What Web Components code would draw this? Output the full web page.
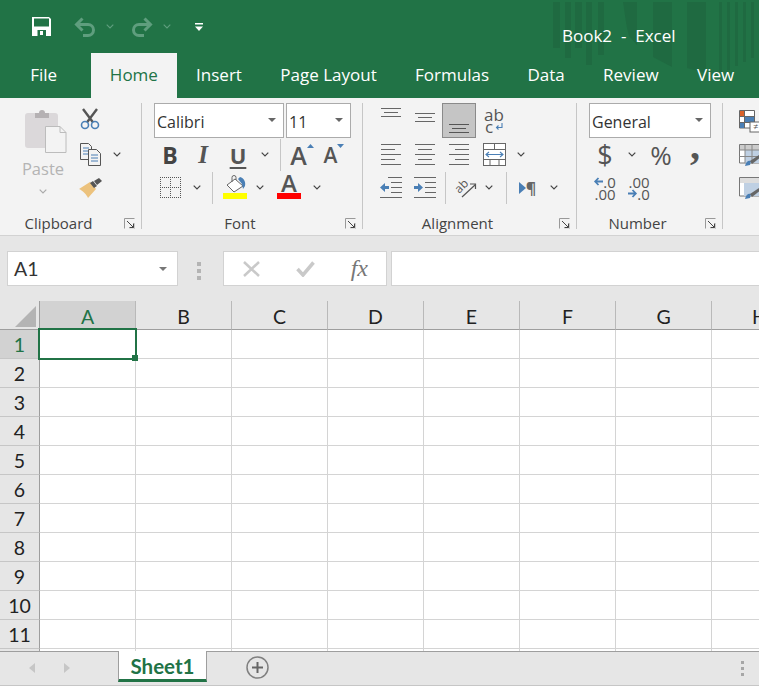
<!DOCTYPE html>
<html>
<head>
<meta charset="utf-8">
<title>Book2 - Excel</title>
<style>
    html,body{margin:0;padding:0;background:#fff;overflow:hidden}
</style>
</head>
<body>
<xl-app>
    <xl-titlebar></xl-titlebar>
    <xl-ribbon>
        <xl-group w="141" label="Clipboard">
            <xl-paste></xl-paste>
            <div style="display:block">
                <xl-row style="height:35px"><xl-tool w="24" icon="cut" style="padding-bottom:3px"></xl-tool></xl-row>
                <xl-row style="height:33px"><xl-tool w="24" icon="copy"></xl-tool><xl-tool w="30" icon="chev"></xl-tool></xl-row>
                <xl-row style="height:33px"><xl-tool w="24" icon="painter"></xl-tool></xl-row>
            </div>
        </xl-group>
        <xl-divider></xl-divider>
        <xl-group w="220" label="Font" pad="12">
            <div style="display:block">
                <xl-row style="height:35px;gap:2px"><xl-combo w="130">Calibri</xl-combo><xl-combo w="65">11</xl-combo></xl-row>
                <xl-row style="height:33px">
                    <xl-tool w="32" style="font:bold 23px 'Open Sans',sans-serif;color:#444">B</xl-tool>
                    <xl-tool w="34" style="font:italic bold 25px 'Liberation Serif',serif;color:#555">I</xl-tool>
                    <xl-tool w="36" style="font:bold 22px 'Open Sans',sans-serif;color:#555;text-decoration:underline;text-underline-offset:3px">U</xl-tool>
                    <xl-tool w="18" icon="chev"></xl-tool>
                    <xl-sep w="12"></xl-sep>
                    <xl-tool w="32" icon="up" raise style="font:600 25px 'Open Sans',sans-serif;color:#555">A</xl-tool>
                    <xl-tool w="32" icon="down" raise style="font:600 21px 'Open Sans',sans-serif;color:#555">A</xl-tool>
                </xl-row>
                <xl-row style="height:33px">
                    <xl-tool w="32" icon="borders"></xl-tool>
                    <xl-tool w="22" icon="chev"></xl-tool>
                    <xl-sep w="8"></xl-sep>
                    <xl-tool w="38" icon="fill"></xl-tool>
                    <xl-tool w="12" icon="chev"></xl-tool>
                    <xl-tool w="46" icon="redbar" stack style="font:600 24px/20px 'Open Sans',sans-serif;color:#555;padding-bottom:4px">A</xl-tool>
                    <xl-tool w="10" icon="chev"></xl-tool>
                </xl-row>
            </div>
        </xl-group>
        <xl-divider></xl-divider>
        <xl-group w="213" label="Alignment" pad="11">
            <div style="display:block">
                <xl-row style="height:35px">
                    <xl-tool w="34" icon="atop" style="padding-bottom:16px"></xl-tool>
                    <xl-tool w="34" icon="amid" style="padding-bottom:5px"></xl-tool>
                    <xl-tool w="34" icon="abot" active></xl-tool>
                    <xl-tool w="36" stack style="font:500 17px/12px 'Open Sans',sans-serif;color:#555">
                        <span>ab</span>
                        <xl-tool w="20" icon="ret" style="height:12px;gap:2px">c</xl-tool>
                    </xl-tool>
                </xl-row>
                <xl-row style="height:33px">
                    <xl-tool w="34" icon="hleft"></xl-tool>
                    <xl-tool w="34" icon="hmid"></xl-tool>
                    <xl-tool w="34" icon="hright"></xl-tool>
                    <xl-tool w="36" icon="merge"></xl-tool>
                    <xl-tool w="18" icon="chev"></xl-tool>
                </xl-row>
                <xl-row style="height:33px">
                    <xl-tool w="34" icon="outdent"></xl-tool>
                    <xl-tool w="34" icon="indent"></xl-tool>
                    <xl-sep w="6"></xl-sep>
                    <xl-tool w="36" icon="orient"></xl-tool>
                    <xl-tool w="10" icon="chev"></xl-tool>
                    <xl-sep w="24"></xl-sep>
                    <xl-tool w="19" before="rtl" style="font:bold 16px 'Open Sans',sans-serif;color:#666">¶</xl-tool>
                    <xl-tool w="34" icon="chev"></xl-tool>
                </xl-row>
            </div>
        </xl-group>
        <xl-divider></xl-divider>
        <xl-group w="145" label="Number" pad="12">
            <div style="display:block">
                <xl-row style="height:35px"><xl-combo w="122">General</xl-combo></xl-row>
                <xl-row style="height:33px">
                    <xl-tool w="32" style="font:400 27px 'Open Sans',sans-serif;color:#555">$</xl-tool>
                    <xl-tool w="22" icon="chev"></xl-tool>
                    <xl-tool w="36" style="font:400 26px 'Open Sans',sans-serif;color:#555">%</xl-tool>
                    <xl-tool w="32" style="font:bold 40px/20px 'Liberation Serif',serif;color:#555;padding-bottom:18px">,</xl-tool>
                </xl-row>
                <xl-row style="height:33px">
                    <xl-tool w="32" stack style="font:15px/12px 'Open Sans',sans-serif;color:#555">
                        <xl-tool w="24" before="arrl" style="height:12px">.0</xl-tool>
                        <span>.00</span>
                    </xl-tool>
                    <xl-tool w="36" stack style="font:15px/12px 'Open Sans',sans-serif;color:#555">
                        <span>.00</span>
                        <xl-tool w="24" before="arrr" style="height:12px">.0</xl-tool>
                    </xl-tool>
                </xl-row>
            </div>
        </xl-group>
        <xl-divider></xl-divider>
        <xl-group w="36" pad="16" nolabel>
            <div style="display:block">
                <xl-row style="height:35px"><xl-tool w="22" icon="cond"></xl-tool></xl-row>
                <xl-row style="height:33px"><xl-tool w="22" icon="table"></xl-tool></xl-row>
                <xl-row style="height:33px"><xl-tool w="22" icon="styles"></xl-tool></xl-row>
            </div>
        </xl-group>
    </xl-ribbon>
    <xl-formula-bar name="A1"></xl-formula-bar>
    <xl-grid></xl-grid>
    <xl-sheetbar sheet="Sheet1"></xl-sheetbar>
</xl-app>

<script>
// lineas horizontales para los iconos de alineacion
const bars = (w, h, list, color = '#666') => `<svg width="${w}" height="${h}" viewBox="0 0 ${w} ${h}"><g fill="${color}">${
    list.map(([x, y, l]) => `<rect x="${x}" y="${y}" width="${l}" height="1"/>`).join('')}</g></svg>`

const svg = (w, h, body) => `<svg width="${w}" height="${h}" viewBox="0 0 ${w} ${h}">${body}</svg>`

const BLUE = '#4a7fb5'

const ICONS = {
    chev: svg(8, 5, '<path d="M.7.7 4 4 7.3.7" fill="none" stroke="#444" stroke-width="1.2"/>'),
    chevlight: svg(8, 5, '<path d="M.7.7 4 4 7.3.7" fill="none" stroke="#aaa" stroke-width="1.2"/>'),
    chevtitle: svg(8, 5, '<path d="M.7.7 4 4 7.3.7" fill="none" stroke="#5f9e7e" stroke-width="1.1"/>'),
    launcher: svg(11, 11, '<path d="M.5 10.5V.5H10.5" fill="none" stroke="#999"/><path d="M3 3l6.5 6.5M9.5 5.5v4h-4" fill="none" stroke="#444"/><path d="M10.5 5v6H5" fill="none" stroke="#ccc"/>'),
    save: svg(19, 19, '<path d="M0 0H17L19 2V19H0Z" fill="#fff"/><rect x="2" y="1.5" width="15" height="8" fill="#217346"/><rect x="5.5" y="13" width="8.5" height="6" fill="#217346"/><rect x="8" y="14" width="3" height="4" fill="#fff"/>'),
    undo: svg(22, 20, '<path d="M8.5 1.5 2.5 7.5 8.5 13.5M2.5 7.5H14a5.5 5.5 0 0 1 0 11H9" fill="none" stroke="#5f9e7e" stroke-width="3"/>'),
    redo: svg(22, 20, '<path d="M13.5 1.5 19.5 7.5 13.5 13.5M19.5 7.5H8a5.5 5.5 0 0 0 0 11H13" fill="none" stroke="#5f9e7e" stroke-width="3"/>'),
    custom: svg(8, 8, '<rect width="8" height="1.5" fill="#fff"/><path d="M0 3.5H8L4 8Z" fill="#fff"/>'),
    paste: svg(42, 44, '<path d="M3 4H30a3 3 0 0 1 3 3V39H3a3 3 0 0 1-3-3V7a3 3 0 0 1 3-3Z" fill="#dbd8da"/><path d="M10 7V4H14a3 3 0 0 1 6 0H24V9H10Z" fill="#b5b1b3"/><path d="M20.5 17.5H35L41 23.5V43.5H20.5Z" fill="#f3f3f3" stroke="#bcbcbc"/><path d="M35 17.5V23.5H41" fill="none" stroke="#bcbcbc"/>'),
    cut: svg(20, 22, '<path d="M3 1 13.5 15M17 1 6.5 15" stroke="#555" stroke-width="2.4" fill="none"/><circle cx="5" cy="17" r="3.5" fill="#f3f3f3" stroke="#4a7fb5" stroke-width="1.6"/><circle cx="15" cy="17" r="3.5" fill="#f3f3f3" stroke="#4a7fb5" stroke-width="1.6"/>'),
    copy: svg(21, 23, `<path d="M.5.5H8.5L11.5 3.5V16.5H.5Z" fill="#f3f3f3" stroke="#555"/><path d="M3 5H9M3 8H9M3 11H9" stroke="${BLUE}"/><path d="M8.5 6.5H16.5L20.5 10.5V22.5H8.5Z" fill="#f3f3f3" stroke="#555"/><path d="M11 12H18M11 15H18M11 18H18" stroke="${BLUE}"/>`),
    painter: svg(23, 20, '<path d="M0 11 11 4 17 11 9 20C8 17 3 12 0 11Z" fill="#ecc27d"/><path d="M11 5 14 3 18 8 15 10Z" fill="#555"/><path d="M15 3 20 0 23 3 18 7Z" fill="#555"/>'),
    borders: svg(21, 21, '<path d="M0 .5H21M0 10.5H21M0 20.5H21M.5 0V21M10.5 0V21M20.5 0V21" fill="none" stroke="#555" stroke-dasharray="1 1" shape-rendering="crispEdges"/>'),
    fill: svg(24, 25, `<path d="M12 4 20 11 11 17 4 10Z" fill="#fff" stroke="#666"/><path d="M9 7V2.5a2 2 0 0 1 4 0V5" fill="none" stroke="#666"/><path d="M17 2C21 3 23 7 22 11L20 14 19 9 15 4Z" fill="${BLUE}"/><rect y="18" width="24" height="6" fill="#ff0"/>`),
    redbar: svg(24, 6, '<rect width="24" height="6" fill="#f00"/>'),
    up: svg(7, 4, `<path d="M0 4 3.5 0 7 4Z" fill="${BLUE}"/>`),
    down: svg(7, 4, `<path d="M0 0H7L3.5 4Z" fill="${BLUE}"/>`),
    atop: bars(20, 10, [[0,0,20],[3,4,14],[0,8,20]]),
    amid: bars(20, 10, [[0,0,20],[3,4,14],[0,8,20]]),
    abot: bars(20, 10, [[0,0,20],[3,4,14],[0,8,20]], '#555'),
    hleft: bars(20, 21, [[0,0,20],[0,5,14],[0,10,20],[0,15,14],[0,20,20]]),
    hmid: bars(20, 21, [[0,0,20],[3,5,14],[0,10,20],[3,15,14],[0,20,20]]),
    hright: bars(20, 21, [[0,0,20],[6,5,14],[0,10,20],[6,15,14],[0,20,20]]),
    ret: svg(8, 8, `<path d="M7 0V4.5H1.5M3.5 2.5 1.5 4.5 3.5 6.5" fill="none" stroke="${BLUE}" stroke-width="1.1"/>`),
    merge: svg(23, 23, `<rect x=".5" y=".5" width="22" height="22" fill="#fff" stroke="#666"/><path d="M1 6.5H22M1 16.5H22M11.5 1V6M7 17V22M16 17V22" stroke="#666"/><path d="M3 11.5H20M6 9 3 11.5 6 14M17 9 20 11.5 17 14" fill="none" stroke="${BLUE}" stroke-width="1.1"/>`),
    outdent: svg(22, 21, `<path d="M8 .5H22M11 5.5H22M11 10.5H22M11 15.5H22M0 20.5H22" stroke="#666"/><path d="M0 10.5 5 6V9H9V12H5V15Z" fill="${BLUE}"/>`),
    indent: svg(22, 21, `<path d="M0 .5H22M11 5.5H22M11 10.5H22M11 15.5H22M0 20.5H22" stroke="#666"/><path d="M9 10.5 4 6V9H0V12H4V15Z" fill="${BLUE}"/>`),
    orient: svg(20, 18, '<text x="6" y="11" text-anchor="middle" transform="rotate(-45 6 8)" font-family="Open Sans" font-size="12" font-weight="500" fill="#555">ab</text><path d="M6 18 19 6M14 5H19.5V10" fill="none" stroke="#555" stroke-width="1.2"/>'),
    rtl: svg(7, 12, `<path d="M0 0 7 6 0 12Z" fill="${BLUE}"/>`),
    arrl: svg(9, 9, `<path d="M4.5 1 1.2 4.5 4.5 8M1.5 4.5H9" fill="none" stroke="${BLUE}" stroke-width="1.8"/>`),
    arrr: svg(9, 9, `<path d="M4.5 1 7.8 4.5 4.5 8M7.5 4.5H0" fill="none" stroke="${BLUE}" stroke-width="1.8"/>`),
    cond: svg(22, 22, `<path d="M.5.5H15.5V18H.5ZM.5 6.5H15.5M.5 12.5H15.5M5.5.5V18" fill="#fff" stroke="#666"/><rect x="1" y="1" width="4" height="5" fill="#d9622b"/><rect x="6" y="7" width="9" height="5" fill="${BLUE}"/><rect x="1" y="13" width="4" height="5" fill="${BLUE}"/><rect x="11" y="12" width="11" height="10" fill="#fff" stroke="#666"/><text x="14" y="20" font-family="Open Sans" font-size="9" fill="#555">≠</text>`),
    table: svg(22, 22, `<path d="M.5.5H20V19H.5Z" fill="#fff" stroke="#777"/><rect x="1" y="1" width="19" height="5" fill="#ccc"/><rect x="6" y="6" width="14" height="13" fill="#bfd0e3"/><path d="M.5 6H20M.5 12.5H20M6 .5V19M13 .5V19" stroke="#888"/><path d="M6 22C7 18 9 16 12 17L11 21Z" fill="${BLUE}"/><path d="M11 17 20 11 22 13 13 20Z" fill="#666"/>`),
    styles: svg(22, 22, `<path d="M.5.5H20V19H.5Z" fill="#fff" stroke="#777"/><rect x="1" y="1" width="19" height="5" fill="#ddd"/><rect x="5" y="6" width="15" height="13" fill="#bfd0e3"/><path d="M6 22C7 18 9 16 12 17L11 21Z" fill="${BLUE}"/><path d="M11 17 20 11 22 13 13 20Z" fill="#666"/>`),
    cross: svg(17, 16, '<path d="M1 1 16 15M16 1 1 15" stroke="#c9c9c9" stroke-width="2.5"/>'),
    check: svg(19, 16, '<path d="M1.5 8 7 14 17.5 1.5" fill="none" stroke="#c9c9c9" stroke-width="3.5"/>'),
}

class XlApp extends HTMLElement{
    constructor(){
        super()
        this.attachShadow({mode: 'open'})
    }
    connectedCallback(){
        this.shadowRoot.innerHTML = `
            <style>
                :host{display:flex;flex-direction:column;width:759px;height:686px;overflow:hidden;background:#fff;font-family:"Open Sans",sans-serif}
            </style>
            <slot></slot>
        `
    }
}

class XlTitlebar extends HTMLElement{
    static get styles(){
        return `
            :host{display:block;position:relative;height:98px;background:#217346;color:#fff;overflow:hidden;flex:none}
            .qat{display:flex;align-items:center;height:53px;padding-left:32px;position:relative}
            .qat svg{flex:none;display:block}
            .title{margin-left:359px;font-size:17px;margin-top:18px;white-space:pre}
            .tabs{display:flex;height:45px;position:relative;font-size:17px}
            .tab{display:flex;align-items:center;padding:0 19.2px 2px;height:45px;white-space:nowrap;box-sizing:border-box}
            .tab.file{margin-left:11px;margin-right:14.6px}
            .tab.on{background:#f3f3f3;color:#217346;padding:0 0 2px;width:86px;justify-content:center}
            .stripes{position:absolute;left:0;top:0}
        `
    }
    constructor(){
        super()
        this.attachShadow({mode: 'open'})
    }
    connectedCallback(){
        const tabs = ['Home','Insert','Page Layout','Formulas','Data','Review','View']
        this.shadowRoot.innerHTML = `
            <style>${XlTitlebar.styles}</style>
            <svg class="stripes" width="759" height="98"><g fill="#1f6a41">
                <rect x="553" y="2" width="7" height="46"/><rect x="565" y="2" width="6" height="56"/>
                <rect x="575" y="2" width="7" height="46"/><rect x="586" y="2" width="6" height="63"/>
                <rect x="598" y="2" width="6" height="53"/>
                <path d="M623 2H637V45L629 36C626 26 625 14 623 2Z"/>
                <path d="M653 2H672V67L653 57Z"/><path d="M687 2H706V73L687 68Z"/>
                <rect x="719" y="2" width="3" height="70"/><rect x="727" y="2" width="3" height="68"/>
                <rect x="735" y="2" width="3" height="64"/><rect x="743" y="2" width="3" height="60"/>
                <rect x="751" y="2" width="3" height="56"/>
            </g></svg>
            <div class="qat">
                ${ICONS.save}
                <span style="margin-left:23px">${ICONS.undo}</span>
                <span style="margin-left:10px">${ICONS.chevtitle}</span>
                <span style="margin-left:17px">${ICONS.redo}</span>
                <span style="margin-left:10px">${ICONS.chevtitle}</span>
                <span style="margin-left:24px">${ICONS.custom}</span>
                <span class="title">Book2  -  Excel</span>
            </div>
            <div class="tabs">
                <div class="tab file">File</div>
                ${tabs.map((t, i) => `<div class="tab ${i == 0 ? 'on' : ''}">${t}</div>`).join('')}
            </div>
        `
    }
}

class XlRibbon extends HTMLElement{
    constructor(){
        super()
        this.attachShadow({mode: 'open'})
    }
    connectedCallback(){
        this.shadowRoot.innerHTML = `
            <style>
                :host{display:flex;height:137px;flex:none;background:#f3f3f3;border-bottom:1px solid #d2d2d2;overflow:hidden}
            </style>
            <slot></slot>
        `
    }
}

class XlGroup extends HTMLElement{
    constructor(){
        super()
        this.attachShadow({mode: 'open'})
    }
    connectedCallback(){
        const label = this.getAttribute('label') || ''
        this.style.width = this.getAttribute('w') + 'px'
        this.style.paddingLeft = (this.getAttribute('pad') || 0) + 'px'
        this.shadowRoot.innerHTML = `
            <style>
                :host{display:flex;flex-direction:column;flex:none;box-sizing:border-box;height:137px}
                .body{display:flex;flex:none;height:109px;padding-top:5px}
                .label{display:flex;align-items:center;height:23px;margin-left:calc(var(--pad) * -1)}
                .label span{flex:1;text-align:center;font-size:15px;color:#444;padding-bottom:2px}
                .launcher{flex:none;margin-right:6px;width:11px;height:11px;margin-left:7px}
                svg{display:block}
            </style>
            <div class="body"><slot></slot></div>
            ${label ? `<div class="label" style="--pad:${this.getAttribute('pad') || 0}px">
                <span>${label}</span><div class="launcher">${ICONS.launcher}</div>
            </div>` : ''}
        `
    }
}

class XlDivider extends HTMLElement{
    constructor(){
        super()
        this.attachShadow({mode: 'open'})
    }
    connectedCallback(){
        this.shadowRoot.innerHTML = `<style>:host{display:block;flex:none;width:1px;height:126px;margin-top:5px;background:#c6c6c6}</style>`
    }
}

class XlRow extends HTMLElement{
    constructor(){
        super()
        this.attachShadow({mode: 'open'})
    }
    connectedCallback(){
        this.shadowRoot.innerHTML = `<style>:host{display:flex;align-items:center}</style><slot></slot>`
    }
}

class XlTool extends HTMLElement{
    constructor(){
        super()
        this.attachShadow({mode: 'open'})
    }
    connectedCallback(){
        const icon = this.getAttribute('icon')
        const before = this.getAttribute('before')
        this.style.width = this.getAttribute('w') + 'px'
        this.shadowRoot.innerHTML = `
            <style>
                :host{display:flex;flex:none;align-items:center;justify-content:center;height:33px;box-sizing:border-box}
                :host([stack]){flex-direction:column;gap:0}
                :host([raise]) svg{align-self:flex-start;margin:6px 0 0 0}
                :host([active]){height:35px;background:#c5c5c5;border:1px solid #8a8a8a;padding-top:16px;margin-top:0}
                svg{display:block;flex:none;overflow:visible}
            </style>
            ${before ? ICONS[before] : ''}<slot></slot>${icon ? ICONS[icon] : ''}
        `
    }
}

class XlSep extends HTMLElement{
    constructor(){
        super()
        this.attachShadow({mode: 'open'})
    }
    connectedCallback(){
        this.style.width = this.getAttribute('w') + 'px'
        this.shadowRoot.innerHTML = `
            <style>
                :host{display:flex;flex:none;justify-content:center;height:32px}
                div{width:1px;background:#c6c6c6}
            </style><div></div>
        `
    }
}

class XlCombo extends HTMLElement{
    constructor(){
        super()
        this.attachShadow({mode: 'open'})
    }
    connectedCallback(){
        this.style.width = this.getAttribute('w') + 'px'
        this.shadowRoot.innerHTML = `
            <style>
                :host{display:flex;flex:none;align-items:center;box-sizing:border-box;height:35px;background:#fff;border:1px solid #ababab;padding:2px 7px 0 2px;font-size:16px;color:#333}
                .t{flex:1}
                i{width:0;height:0;border:4px solid transparent;border-top:4px solid #666;border-bottom:0;margin-top:-3px}
            </style>
            <span class="t"><slot></slot></span><i></i>
        `
    }
}

class XlPaste extends HTMLElement{
    constructor(){
        super()
        this.attachShadow({mode: 'open'})
    }
    connectedCallback(){
        this.shadowRoot.innerHTML = `
            <style>
                :host{display:flex;flex-direction:column;align-items:center;flex:none;width:70px;margin:6px 0 0 8px;color:#b4b4b4;font-size:16.5px;position:relative}
                svg{display:block;flex:none}
                .ic{margin-left:6px}
                .t{margin-top:5px;line-height:22px}
                .c{margin-top:9px}
            </style>
            <div class="ic">${ICONS.paste}</div>
            <div class="t">Paste</div>
            <div class="c">${ICONS.chevlight}</div>
        `
    }
}

class XlFormulaBar extends HTMLElement{
    static get styles(){
        return `
            :host{display:flex;align-items:flex-start;height:65px;flex:none;box-sizing:border-box;padding:15px 0 0 7px;background:#e6e6e6}
            .box{display:flex;align-items:center;box-sizing:border-box;height:35px;background:#fff;border:1px solid #d2d2d2}
            .name{width:171px;padding:0 10px 0 6px;font:19.5px Lato,sans-serif;color:#333}
            .name span{flex:1}
            .name i{width:0;height:0;border:4px solid transparent;border-top:4px solid #777;border-bottom:0}
            .dots{display:flex;flex-direction:column;gap:3px;width:4px;margin:11px 22px 0 19px}
            .dots b{width:4px;height:4px;background:#b4b4b4}
            .fx{width:164px;justify-content:space-between;padding:0 18px 0 19px}
            .fx em{font:italic 400 24px "Liberation Serif",serif;color:#777}
            .input{width:368px;margin-left:4px;border-right:0}
            svg{display:block}
        `
    }
    constructor(){
        super()
        this.attachShadow({mode: 'open'})
    }
    connectedCallback(){
        this.shadowRoot.innerHTML = `
            <style>${XlFormulaBar.styles}</style>
            <div class="box name"><span>${this.getAttribute('name')}</span><i></i></div>
            <div class="dots"><b></b><b></b><b></b></div>
            <div class="box fx">${ICONS.cross}${ICONS.check}<em>fx</em></div>
            <div class="box input"></div>
        `
    }
}

class XlGrid extends HTMLElement{
    static get styles(){
        return `
            :host{display:block;position:relative;height:350px;flex:none;overflow:hidden;background:#fff}
            .sheet{display:grid;grid-template-columns:40px repeat(8,96px);grid-auto-rows:29px;font:19.5px Lato,sans-serif;color:#222}
            .h{display:flex;align-items:center;justify-content:center;box-sizing:border-box;background:#e6e6e6}
            .col{border-right:1px solid #b9b9b9;border-bottom:1px solid #9e9e9e;padding-top:2px}
            .row{border-right:1px solid #9e9e9e;border-bottom:1px solid #c6c6c6}
            .on{background:#d2d2d2;color:#217346}
            .c{box-sizing:border-box;border-right:1px solid #d4d4d4;border-bottom:1px solid #d4d4d4}
            .corner{position:relative;border-right:1px solid #9e9e9e;border-bottom:1px solid #9e9e9e;background:#e6e6e6;box-sizing:border-box}
            .corner svg{position:absolute;left:15px;top:5px}
            .active{position:absolute;left:38px;top:27px;width:99px;height:32px;box-sizing:border-box;border:2px solid #217346}
            .handle{position:absolute;left:132px;top:54px;width:6px;height:6px;background:#217346}
        `
    }
    constructor(){
        super()
        this.attachShadow({mode: 'open'})
    }
    connectedCallback(){
        const cols = 'ABCDEFGH'.split('')
        let cells = `<div class="corner"><svg width="21" height="21"><path d="M21 0V21H0Z" fill="#b4b4b4"/></svg></div>`
        cells += cols.map((c, i) => `<div class="h col ${i == 0 ? 'on' : ''}">${c}</div>`).join('')
        for(let r = 1; r <= 12; r++){
            cells += `<div class="h row ${r == 1 ? 'on' : ''}">${r < 12 ? r : ''}</div>`
            cells += cols.map(() => '<div class="c"></div>').join('')
        }
        this.shadowRoot.innerHTML = `
            <style>${XlGrid.styles}</style>
            <div class="sheet">${cells}</div>
            <div class="active"></div>
            <div class="handle"></div>
        `
    }
}

class XlSheetbar extends HTMLElement{
    static get styles(){
        return `
            :host{display:flex;align-items:flex-start;flex:none;box-sizing:border-box;height:35px;background:#e6e6e6;border-top:1px solid #9e9e9e;border-bottom:1px solid #c6c6c6}
            .nav{display:flex;align-items:center;width:118px;height:31px;padding-left:29px;box-sizing:border-box;gap:29px}
            .nav i{width:0;height:0;border:5px solid transparent}
            .nav .l{border-right:6px solid #c6c6c6;border-left:0}
            .nav .r{border-left:6px solid #c6c6c6;border-right:0}
            .tab{display:flex;align-items:center;justify-content:center;box-sizing:border-box;width:89px;height:31px;margin-top:-1px;padding-top:2px;background:#fff;border:1px solid #9e9e9e;border-width:0 1px;border-bottom:3px solid #217346;font:bold 20.5px Lato,sans-serif;color:#217346}
            .add{margin:4px 0 0 39px;display:block}
            .grip{display:flex;flex-direction:column;gap:3px;margin:9px 15px 0 auto}
            .grip b{width:3px;height:3px;background:#a6a6a6}
        `
    }
    constructor(){
        super()
        this.attachShadow({mode: 'open'})
    }
    connectedCallback(){
        this.shadowRoot.innerHTML = `
            <style>${XlSheetbar.styles}</style>
            <div class="nav"><i class="l"></i><i class="r"></i></div>
            <div class="tab">${this.getAttribute('sheet')}</div>
            <svg class="add" width="23" height="23" viewBox="0 0 23 23"><circle cx="11.5" cy="11.5" r="10.5" fill="none" stroke="#808080" stroke-width="1.5"/><path d="M11.5 6V17M6 11.5H17" stroke="#666" stroke-width="2"/></svg>
            <div class="grip"><b></b><b></b><b></b></div>
        `
    }
}

customElements.define('xl-app', XlApp)
customElements.define('xl-titlebar', XlTitlebar)
customElements.define('xl-ribbon', XlRibbon)
customElements.define('xl-group', XlGroup)
customElements.define('xl-divider', XlDivider)
customElements.define('xl-row', XlRow)
customElements.define('xl-tool', XlTool)
customElements.define('xl-sep', XlSep)
customElements.define('xl-combo', XlCombo)
customElements.define('xl-paste', XlPaste)
customElements.define('xl-formula-bar', XlFormulaBar)
customElements.define('xl-grid', XlGrid)
customElements.define('xl-sheetbar', XlSheetbar)
</script>
</body>
</html>
